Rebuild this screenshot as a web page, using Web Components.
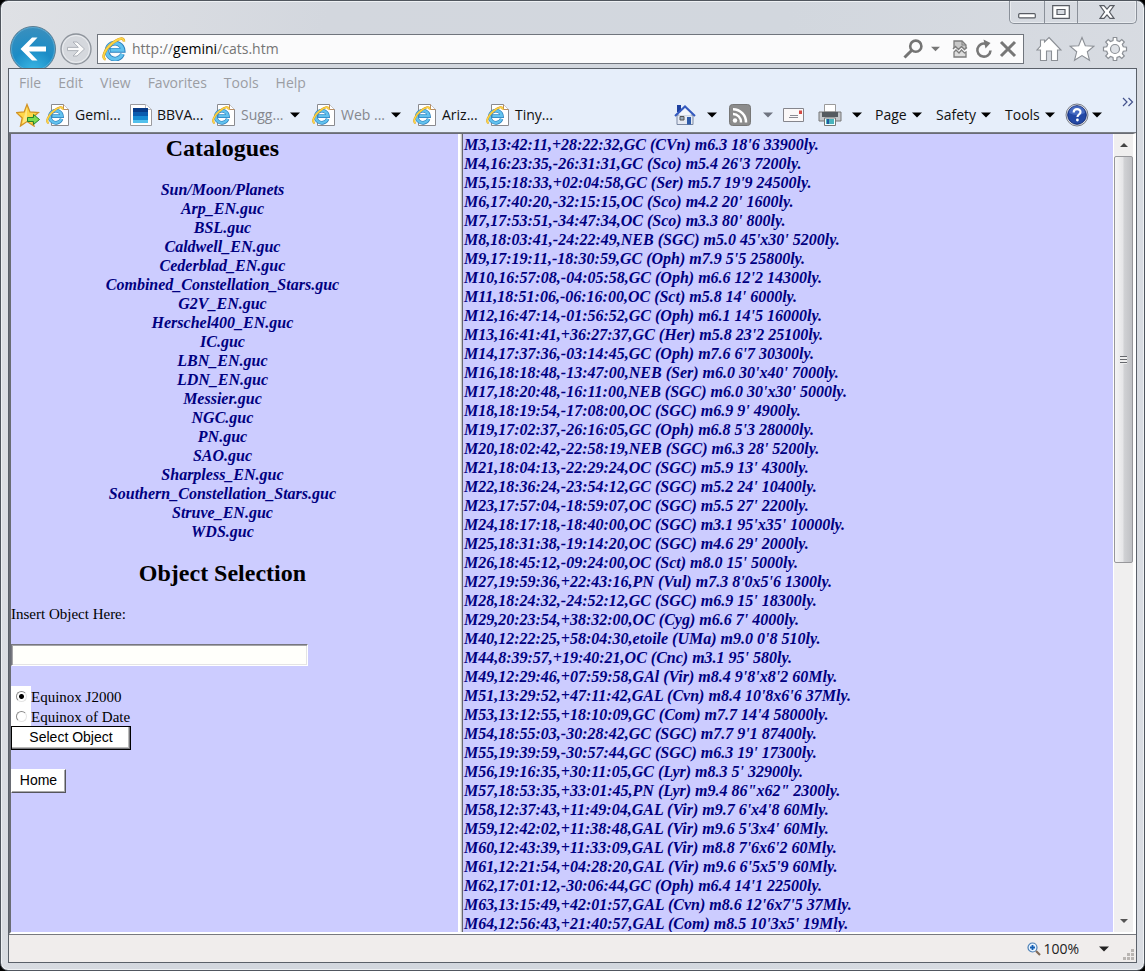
<!DOCTYPE html>
<html lang="en">
<head>
<meta charset="utf-8">
<title>Catalogues</title>
<style>
html, body { margin: 0; height: 100%; background: #000; }
body { font: 14px/20px "Open Sans", "Noto Sans", sans-serif; color: #111; overflow: hidden; }
</style>
</head>
<body>
<browser-window>
  <window-controls slot="controls"></window-controls>
  <nav-bar slot="nav"></nav-bar>
  <menu-bar slot="menus"></menu-bar>
  <favorites-bar slot="tools"></favorites-bar>
  <catalogue-frame slot="left"></catalogue-frame>
  <object-frame slot="right"></object-frame>
  <scroll-bar slot="scroll"></scroll-bar>
  <status-bar slot="status"></status-bar>
</browser-window>

<script>
const define = (name, html, setup) => customElements.define(name, class extends HTMLElement {
  constructor() {
    super();
    const t = document.createElement('template');
    t.innerHTML = html;
    this.attachShadow({ mode: 'open' }).append(t.content.cloneNode(true));
  }
  connectedCallback() { if (setup) setup(this, this.shadowRoot); }
});

const eGlyph = `<path d="M20.500 17A8 8 0 1 1 21 13.300H8" fill="none" stroke="#2b7fbd" stroke-width="4.800"/>
  <path d="M20.300 17A8 8 0 1 1 20.800 13.200H8.500" fill="none" stroke="#62c2ee" stroke-width="3.200"/>
  <path d="M3.500 22.500C-1 21 3 12 10 6.500S22 0 22 4.500" fill="none" stroke="#d99a12" stroke-width="2.600"/>
  <path d="M3.500 22.500C-1 21 3 12 10 6.500S22 0 22 4.500" fill="none" stroke="#fbd548" stroke-width="1.800"/>`;

const ICONS = {
  back: ['0 0 46 46', `<defs><radialGradient id="g" cx=".5" cy="1" r="1"><stop offset="0" stop-color="#3cb9e6"/><stop offset=".5" stop-color="#1b8cc6"/><stop offset="1" stop-color="#3b8fbd"/></radialGradient></defs>
    <circle cx="23" cy="23" r="22.500" fill="url(#g)" stroke="#5c7d92"/><circle cx="23" cy="23" r="21.500" fill="none" stroke="#6fb8da" opacity=".6"/>
    <path d="M10.500 23 22 11.500h5.500l-8.500 9H36v5H19l8.500 9H22z" fill="#fff"/>`],
  forward: ['0 0 32 32', `<circle cx="16" cy="16" r="15" fill="#d5d8dd" stroke="#8d939b" stroke-width="1.300"/><circle cx="16" cy="16" r="13.500" fill="none" stroke="#eceef1"/>
    <path d="M24.500 16 17 9h-4l5.300 5.400H7.500v3.200h10.800L13 23h4z" fill="#fafafa" stroke="#a8adb4" stroke-width=".9"/>`],
  ie: ['0 0 24 24', eGlyph],
  iepage: ['0 0 24 24', `<path d="M5.500 1.500h12l5 5v16h-17z" fill="#fff" stroke="#8a8a8e"/><path d="M17.500 1.500v5h5" fill="#fff" stroke="#b98d62"/><g transform="translate(0 3) scale(.76)">${eGlyph}</g>`],
  bbva: ['0 0 22 24', `<path d="M.5 1.500h15l6 5v16H.5z" fill="#fff" stroke="#9a9a9e"/><path d="M15.500 1.500v5h6" fill="#fff" stroke="#b7b7bb"/>
    <path d="M3 5h15v5H3z" fill="#063a87"/><path d="M3 9h15v4H3z" fill="#0a5bae"/><path d="M3 13h15v4H3z" fill="#168bd3"/><path d="M3 17h15v3H3z" fill="#52c0ec"/>`],
  addfav: ['0 0 24 24', `<path d="M11 1.500 14 9l8.500.5-6.500 5.500 2 8-7-4.500L4.500 23l1.700-8L0.500 9.700 8.200 9z" fill="#ffd748" stroke="#d29325" stroke-width="1.300"/><path d="M11 4v14l-4.500 2.500 1.300-6z" fill="#ffed9a" opacity=".7"/>
    <path d="M11.500 14.500h6V11.500l6 5-6 5v-3h-6z" fill="#7bdc50" stroke="#27832c"/>`],
  search: ['0 0 20 20', `<circle cx="12.800" cy="7.200" r="5.600" fill="none" stroke="#747474" stroke-width="2.600"/><path d="m8.800 11.200-7.300 7.300" stroke="#747474" stroke-width="3"/>`],
  compat: ['0 0 16 20', `<path d="M2 9V2h8l4 4v3" fill="#c8c8c8" stroke="#7c7c7c" stroke-width="1.300"/><path d="M10 2v4h4" fill="none" stroke="#7c7c7c"/><path d="m1 10 2.500-2.500 3 3 3-3 3 3L15 8.500" fill="none" stroke="#7c7c7c" stroke-width="1.400"/><path d="M2 18v-5l2-2 3 3 2.500-3 3 3 1.500-1v5z" fill="#ddd" stroke="#7c7c7c" stroke-width="1.300"/>`],
  refresh: ['0 0 20 20', `<path d="M16.500 11.500A6.600 6.600 0 1 1 12 4.800" fill="none" stroke="#777" stroke-width="2.600"/><path d="m9.500.5 7 3.500-5 5.500z" fill="#777"/>`],
  stop: ['0 0 20 20', `<path d="m3 3 14 14M17 3 3 17" stroke="#777" stroke-width="3"/>`],
  home: ['0 0 26 26', `<path d="M13 1.500 25 14h-3.500v10.500h-6V15h-5v9.500h-6V14H1l3.500-4V4h4v2z" fill="#fff" stroke="#8b8f95" stroke-width="1.100"/>`],
  star: ['0 0 26 26', `<path d="m13 1.500 3.300 8.200 8.700.5-6.700 5.600 2.200 8.500L13 19.600l-7.500 4.700 2.200-8.500L1 10.200l8.700-.5z" fill="#fff" stroke="#8b8f95" stroke-width="1.100"/>`],
  gear: ['0 0 26 26', `<path d="M11 4.500 11.300 1.500h3.400l.3 3 2.500 1 2.300-2 2.500 2.500-2 2.300 1 2.500 3.200.4v3.600l-3.200.4-1 2.500 2 2.300-2.500 2.500-2.300-2-2.500 1-.3 3h-3.400l-.3-3-2.500-1-2.300 2L3.700 20l2-2.300-1-2.500-3.200-.4v-3.600l3.200-.4 1-2.500-2-2.300 2.500-2.500 2.300 2z" fill="#fff" stroke="#8b8f95" stroke-width="1.200"/><circle cx="13" cy="13" r="4.500" fill="#dfe2e7" stroke="#8b8f95" stroke-width="1.200"/>`],
  chome: ['0 0 22 22', `<path d="M3 11h16v9.500H3z" fill="#e4e9f3" stroke="#7a88a3"/><path d="M3 1h4v7H3z" fill="#1c3f9f"/><path d="M11 4 5 10.500v1h12v-1z" fill="#f2f5fb"/><path d="m1 12 10-9.500L21 12" fill="none" stroke="#3459be" stroke-width="2"/><path d="M13 13h4v7.500h-4z" fill="#2d5aa9"/><path d="M6 12.500h4V16H6z" fill="#9ab" stroke="#555"/>`],
  rss: ['0 0 22 22', `<rect x=".5" y=".5" width="21" height="21" rx="3" fill="#8c8c8c" stroke="#777"/><circle cx="6" cy="16.500" r="2.200" fill="#fff"/><path d="M4 10a8 8 0 0 1 8 8.500M4 5.200a13 13 0 0 1 13 13.300" fill="none" stroke="#fff" stroke-width="2.500"/>`],
  mail: ['0 0 22 16', `<path d="M.5 1.500h20v13H.5z" fill="#fbf8f8" stroke="#85858c"/><path d="M16 3.500h3v3.500h-3z" fill="#d34a44"/><path d="M7 8.500h8M6 10.500h9" stroke="#8a8a92"/>`],
  print: ['0 0 24 24', `<path d="M6.500 1.500h11V9h-11z" fill="#fff" stroke="#9a9a9a"/><path d="M1 9h22v9H1z" fill="#c3c6ca" stroke="#777"/><path d="M4 9h16v5H4z" fill="#555b60"/><path d="M6.500 15h11v7.500h-11z" fill="#f2ffff" stroke="#777"/><path d="M8 16h8v5H8z" fill="#49b4bd"/><path d="M9 16h2v5H9z" fill="#2359a0"/>`],
  help: ['0 0 24 24', `<circle cx="12" cy="12" r="11" fill="#e5e5e8" stroke="#777c88"/><circle cx="12" cy="12" r="9.300" fill="#2449a6" stroke="#132d78"/><path d="M4 10a8 7 0 0 1 16 0q-8 4-16 0" fill="#5f82d6" opacity=".6"/><path d="M8.700 9.500c0-4.500 6.800-4.200 6.800-.5 0 2.600-3 2.400-3 5" fill="none" stroke="#fff" stroke-width="2.200"/><circle cx="12.400" cy="17" r="1.400" fill="#fff"/>`],
  caret: ['0 0 10 6', `<path d="M0 .5h10l-5 5z" fill="currentColor"/>`],
  chevrons: ['0 0 12 10', `<path d="m1 1 4 4-4 4m5.500-8 4 4-4 4" fill="none" stroke="#44528c" stroke-width="1.200"/>`],
  zoom: ['0 0 14 14', `<circle cx="5.500" cy="5.500" r="4.500" fill="#e8f4ff" stroke="#4c7fb5" stroke-width="1.200"/><path d="M5.500 3v5M3 5.500h5" stroke="#1560b5" stroke-width="1.800"/><path d="m9 9 4 4" stroke="#826a56" stroke-width="2.200"/>`],
  grip: ['0 0 12 12', `<path d="M8 0h3v3H8zM4 4h3v3H4zM8 4h3v3H8zM0 8h3v3H0zM4 8h3v3H4zM8 8h3v3H8z" fill="#b9b5b2"/>`],
  min: ['0 0 18 6', `<rect x=".7" y=".7" width="16.600" height="4.200" rx="1" fill="#fff" stroke="#585c63" stroke-width="1.200"/>`],
  max: ['0 0 18 14', `<path d="M.7.7h16.600v12.600H.7z" fill="#fff" stroke="#585c63" stroke-width="1.200"/><path d="M5 4.500h8v5H5z" fill="#d8dce2" stroke="#585c63" stroke-width="1.200"/>`],
  close: ['0 0 16 14', `<path d="M1 .7h4l3 3.500L11 .7h4L10.500 7l4.500 6.300h-4L8 9.800l-3 3.500H1L5.500 7z" fill="#fff" stroke="#585c63" stroke-width="1.200"/>`],
  up: ['0 0 10 6', `<path d="M0 5.500h10l-5-5z" fill="#444"/>`],
  down: ['0 0 10 6', `<path d="M0 .5h10l-5 5z" fill="#555"/>`]
};

define('ui-icon', `<style>:host{display:block;flex:none}svg{display:block;width:100%;height:100%}</style><svg aria-hidden="true"></svg>`, (el, root) => {
  const [box, body] = ICONS[el.getAttribute('name')];
  const svg = root.querySelector('svg');
  svg.setAttribute('viewBox', box);
  svg.innerHTML = body;
  const [, , w, h] = box.split(' ');
  el.style.width = (el.getAttribute('w') || w) + 'px';
  el.style.height = (el.getAttribute('h') || h) + 'px';
});

define('browser-window', `<style>
  :host{display:flex;flex-direction:column;height:100vh;box-sizing:border-box;border:1px solid #50565e;border-radius:8px;padding:0 7px 7px;
    background:linear-gradient(100deg,#dfe1e5,#d3d7de 25%,#d2d7de 60%,#dadde3);box-shadow:inset 0 0 0 1px #eef1f4}
  header{flex:none}
  main{flex:1;min-height:0;display:flex;flex-direction:column;border:1px solid #5a6069;background:#fff}
  .bars{flex:none;background:#e6eefa;border-bottom:1px solid #7b7f86}
  .frames{flex:1;min-height:0;display:grid;grid-template-columns:11fr 5px 16fr 20px;border:solid #696c74;border-width:1px 3px 2px 2px;border-right-color:#fff;border-bottom-color:#fff}
  .split{background:linear-gradient(90deg,#fff 2px,#eee 2px 3px,#c8c8c8 3px 4px,#66666e 4px)}
  ::slotted(*){min-height:0}
  footer{flex:none;border-top:1px solid #77797f}
</style>
<header><slot name="controls"></slot><slot name="nav"></slot></header>
<main><div class="bars"><slot name="menus"></slot><slot name="tools"></slot></div>
<div class="frames"><slot name="left"></slot><div class="split"></div><slot name="right"></slot><slot name="scroll"></slot></div>
<footer><slot name="status"></slot></footer></main>`);

define('window-controls', `<style>
  :host{display:flex;justify-content:flex-end;height:23px}
  div{display:grid;grid-template-columns:34px 33px 59px;border:1px solid #8a9099;border-top:0;border-radius:0 0 5px 5px;box-shadow:inset 0 0 0 1px #e8ebef}
  button{border:0;background:none;padding:0;display:grid;place-items:center}
  button+button{border-left:1px solid #8a9099}
  button:first-child{padding-top:8px}
</style><div><button aria-label="Minimize"><ui-icon name="min"></ui-icon></button><button aria-label="Maximize"><ui-icon name="max"></ui-icon></button><button aria-label="Close"><ui-icon name="close"></ui-icon></button></div>`);

define('nav-bar', `<style>
  :host{display:flex;align-items:center;box-sizing:border-box;height:44px;padding:6px 9px 0 2px;overflow:hidden}
  button{border:0;background:none;padding:0;flex:none}
  .back{margin:-8px 4px -8px 0}
  .forward{margin-right:5px}
  .address{flex:1;display:flex;align-items:center;height:30px;box-sizing:border-box;border:1px solid #70757d;background:#fbfbfc;padding:0 5px 0 4px;margin-right:12px}
  .url{flex:1;display:flex;margin-left:6px;color:#757575;outline:0}
  b{font-weight:400;color:#000}
  .tools,.side{display:flex;align-items:center}
  .tools button:nth-child(2){margin:0 12px 0 8px;color:#777}
  .tools button:nth-child(3){margin-right:6px}
  .tools button:nth-child(4){margin-right:4px}
  .side{gap:7px}
</style>
<button class="back" aria-label="Back"><ui-icon name="back"></ui-icon></button>
<button class="forward" aria-label="Forward"><ui-icon name="forward"></ui-icon></button>
<div class="address"><ui-icon name="ie"></ui-icon>
<div class="url" role="textbox" aria-label="Address"><span>http://<b>gemini</b>/cats.htm</span></div>
<div class="tools"><button aria-label="Search"><ui-icon name="search"></ui-icon></button><button aria-label="Search options"><ui-icon name="caret" w="9"></ui-icon></button><button aria-label="Compatibility view"><ui-icon name="compat"></ui-icon></button><button aria-label="Refresh"><ui-icon name="refresh"></ui-icon></button><button aria-label="Stop"><ui-icon name="stop"></ui-icon></button></div></div>
<div class="side"><button aria-label="Home"><ui-icon name="home"></ui-icon></button><button aria-label="Favorites"><ui-icon name="star"></ui-icon></button><button aria-label="Settings"><ui-icon name="gear"></ui-icon></button></div>`);

define('menu-bar', `<style>
  :host{display:flex;gap:17px;height:28px;padding-left:10px}
  button{border:0;background:none;padding:0;font:inherit;color:#9b9da3}
</style><button>File</button><button>Edit</button><button>View</button><button>Favorites</button><button>Tools</button><button>Help</button>`);

define('tool-item', `<style>
  :host{display:block;flex:none}
  button{display:flex;align-items:center;width:100%;height:100%;border:0;background:none;padding:0;font:inherit;color:inherit;white-space:nowrap}
  span{margin:0 5px}
  span:first-child{margin-left:0}
  .drop{color:#000}
  :host([pale]) .drop{color:#6f7480}
</style><button></button>`, (el, root) => {
  const b = root.querySelector('button');
  const icon = el.getAttribute('icon'), text = el.getAttribute('text');
  if (el.title) b.setAttribute('aria-label', el.title);
  b.innerHTML = (icon ? `<ui-icon name="${icon}"></ui-icon>` : '') + (text ? `<span>${text}</span>` : '') +
    (el.hasAttribute('drop') ? `<ui-icon class="drop" name="caret" style="margin-left:${el.getAttribute('drop') || 0}px"></ui-icon>` : '');
  el.style.width = el.getAttribute('span') + 'px';
});

define('favorites-bar', `<style>
  :host{display:flex;height:35px}
  .fav{display:flex;margin-left:7px}
  .cmd{display:flex;margin-left:auto}
  .dim{color:#85878d}
  .more{border:0;background:none;padding:0;width:14px;align-self:flex-start}
</style>
<div class="fav">
<tool-item icon="addfav" span="30" title="Add to Favorites"></tool-item>
<tool-item icon="iepage" text="Gemi..." span="84"></tool-item>
<tool-item icon="bbva" text="BBVA..." span="82"></tool-item>
<tool-item class="dim" icon="iepage" text="Sugg..." drop="1" span="100"></tool-item>
<tool-item class="dim" icon="iepage" text="Web ..." drop="1" span="101"></tool-item>
<tool-item icon="iepage" text="Ariz..." span="73"></tool-item>
<tool-item icon="iepage" text="Tiny..." span="64"></tool-item>
</div>
<div class="cmd">
<tool-item icon="chome" drop="11" span="55" title="Home"></tool-item>
<tool-item icon="rss" drop="12" pale span="54" title="Feeds"></tool-item>
<tool-item icon="mail" span="35" title="Read mail"></tool-item>
<tool-item icon="print" drop="10" span="57" title="Print"></tool-item>
<tool-item text="Page" drop span="61"></tool-item>
<tool-item text="Safety" drop span="69"></tool-item>
<tool-item text="Tools" drop span="60"></tool-item>
<tool-item icon="help" drop="3" span="57" title="Help"></tool-item>
<button class="more" aria-label="More"><ui-icon name="chevrons"></ui-icon></button>
</div>`);

const catalogues = ['Sun/Moon/Planets', 'Arp_EN.guc', 'BSL.guc', 'Caldwell_EN.guc', 'Cederblad_EN.guc', 'Combined_Constellation_Stars.guc', 'G2V_EN.guc', 'Herschel400_EN.guc', 'IC.guc', 'LBN_EN.guc', 'LDN_EN.guc', 'Messier.guc', 'NGC.guc', 'PN.guc', 'SAO.guc', 'Sharpless_EN.guc', 'Southern_Constellation_Stars.guc', 'Struve_EN.guc', 'WDS.guc'];

const linkCss = `ul{list-style:none;margin:0;padding:0}li{height:19px;white-space:nowrap}a{color:#000080;font-weight:bold;font-style:italic;text-decoration:none}`;

define('catalogue-frame', `<style>
  :host{display:block;background:#ccf;overflow:hidden;font:16px/19px "Liberation Serif",serif;color:#000}
  ${linkCss}
  .top{padding-right:24px;text-align:center}
  h2{font-size:24px;line-height:28px;margin:0 0 18px}
  ul+h2{margin-top:18px}
  form{font-size:15px}
  .text{display:block}
  #object{display:block;box-sizing:border-box;width:297px;height:22px;margin:20px 0;padding:0 3px;border:1px solid;border-color:#77777f #fff #fff #77777f;border-radius:0;background:#fffffb;box-shadow:inset 1px 1px #a5a5a8,inset -1px -1px #e4e4e4;outline:0}
  .option{display:flex;height:20px;line-height:22px}
  .box{width:20px;background:#fff;display:grid;place-items:center}
  .box input{appearance:none;width:11px;height:11px;margin:0;border:1px solid;border-color:#888 #e4e4e4 #e4e4e4 #888;border-radius:50%;background:#fff}
  .box input:checked{background:radial-gradient(circle,#000 2px,#fff 3px)}
  button{display:block;box-sizing:border-box;height:24px;padding:0 0 2px;font:14px/18px "Liberation Sans",sans-serif;color:#000;background:#fff;border:1px solid;border-color:#fff #55555c #55555c #fff;box-shadow:inset -1px -1px #aaa}
  .select{width:120px;border-color:#000;box-shadow:inset -1px -1px #77777c,inset -2px -2px #bbb}
  .home{width:55px;margin-top:19px}
</style>
<div class="top"><h2>Catalogues</h2><ul></ul><h2>Object Selection</h2></div>
<form onsubmit="return false">
<label class="text" for="object">Insert Object Here:</label><input id="object" type="text">
<div class="option"><span class="box"><input type="radio" id="j2000" name="equinox" checked></span><label for="j2000">Equinox J2000</label></div>
<div class="option"><span class="box"><input type="radio" id="date" name="equinox"></span><label for="date">Equinox of Date</label></div>
<button class="select">Select Object</button>
<button class="home" type="button">Home</button>
</form>`, (el, root) => {
  root.querySelector('ul').innerHTML = catalogues.map(c => `<li><a href="#${c}">${c}</a></li>`).join('');
});

const objects = `M3,13:42:11,+28:22:32,GC (CVn) m6.3 18'6 33900ly.
M4,16:23:35,-26:31:31,GC (Sco) m5.4 26'3 7200ly.
M5,15:18:33,+02:04:58,GC (Ser) m5.7 19'9 24500ly.
M6,17:40:20,-32:15:15,OC (Sco) m4.2 20' 1600ly.
M7,17:53:51,-34:47:34,OC (Sco) m3.3 80' 800ly.
M8,18:03:41,-24:22:49,NEB (SGC) m5.0 45'x30' 5200ly.
M9,17:19:11,-18:30:59,GC (Oph) m7.9 5'5 25800ly.
M10,16:57:08,-04:05:58,GC (Oph) m6.6 12'2 14300ly.
M11,18:51:06,-06:16:00,OC (Sct) m5.8 14' 6000ly.
M12,16:47:14,-01:56:52,GC (Oph) m6.1 14'5 16000ly.
M13,16:41:41,+36:27:37,GC (Her) m5.8 23'2 25100ly.
M14,17:37:36,-03:14:45,GC (Oph) m7.6 6'7 30300ly.
M16,18:18:48,-13:47:00,NEB (Ser) m6.0 30'x40' 7000ly.
M17,18:20:48,-16:11:00,NEB (SGC) m6.0 30'x30' 5000ly.
M18,18:19:54,-17:08:00,OC (SGC) m6.9 9' 4900ly.
M19,17:02:37,-26:16:05,GC (Oph) m6.8 5'3 28000ly.
M20,18:02:42,-22:58:19,NEB (SGC) m6.3 28' 5200ly.
M21,18:04:13,-22:29:24,OC (SGC) m5.9 13' 4300ly.
M22,18:36:24,-23:54:12,GC (SGC) m5.2 24' 10400ly.
M23,17:57:04,-18:59:07,OC (SGC) m5.5 27' 2200ly.
M24,18:17:18,-18:40:00,OC (SGC) m3.1 95'x35' 10000ly.
M25,18:31:38,-19:14:20,OC (SGC) m4.6 29' 2000ly.
M26,18:45:12,-09:24:00,OC (Sct) m8.0 15' 5000ly.
M27,19:59:36,+22:43:16,PN (Vul) m7.3 8'0x5'6 1300ly.
M28,18:24:32,-24:52:12,GC (SGC) m6.9 15' 18300ly.
M29,20:23:54,+38:32:00,OC (Cyg) m6.6 7' 4000ly.
M40,12:22:25,+58:04:30,etoile (UMa) m9.0 0'8 510ly.
M44,8:39:57,+19:40:21,OC (Cnc) m3.1 95' 580ly.
M49,12:29:46,+07:59:58,GAl (Vir) m8.4 9'8'x8'2 60Mly.
M51,13:29:52,+47:11:42,GAL (Cvn) m8.4 10'8x6'6 37Mly.
M53,13:12:55,+18:10:09,GC (Com) m7.7 14'4 58000ly.
M54,18:55:03,-30:28:42,GC (SGC) m7.7 9'1 87400ly.
M55,19:39:59,-30:57:44,GC (SGC) m6.3 19' 17300ly.
M56,19:16:35,+30:11:05,GC (Lyr) m8.3 5' 32900ly.
M57,18:53:35,+33:01:45,PN (Lyr) m9.4 86"x62" 2300ly.
M58,12:37:43,+11:49:04,GAL (Vir) m9.7 6'x4'8 60Mly.
M59,12:42:02,+11:38:48,GAL (Vir) m9.6 5'3x4' 60Mly.
M60,12:43:39,+11:33:09,GAL (Vir) m8.8 7'6x6'2 60Mly.
M61,12:21:54,+04:28:20,GAL (Vir) m9.6 6'5x5'9 60Mly.
M62,17:01:12,-30:06:44,GC (Oph) m6.4 14'1 22500ly.
M63,13:15:49,+42:01:57,GAL (Cvn) m8.6 12'6x7'5 37Mly.
M64,12:56:43,+21:40:57,GAL (Com) m8.5 10'3x5' 19Mly.`.split('\n');

define('object-frame', `<style>
  :host{display:block;background:#ccf;overflow:hidden;font:16px/19px "Liberation Serif",serif}
  ${linkCss}
  ul{padding:1px 0 0 1px}
</style><ul></ul>`, (el, root) => {
  root.querySelector('ul').innerHTML = objects.map(o => `<li><a href="#${o.split(',')[0]}">${o}</a></li>`).join('');
});

define('scroll-bar', `<style>
  :host{display:flex;flex-direction:column;background:#f0efef;border-left:1px solid #fff}
  button{border:0;background:none;padding:0;height:22px;flex:none;display:grid;place-items:center}
  .track{flex:1;min-height:0}
  .thumb{height:54%;box-sizing:border-box;border:1px solid #97979b;border-radius:2px;background:linear-gradient(90deg,#f5f5f5,#e6e6e8 45%,#d0d1d4 55%,#bfc0c4);display:grid;place-items:center}
  i{width:7px;height:8px;background:repeating-linear-gradient(#66686d 0 1px,#eee 1px 3px)}
</style><button aria-label="Scroll up"><ui-icon name="up" w="8"></ui-icon></button><div class="track"><div class="thumb"><i></i></div></div><button aria-label="Scroll down"><ui-icon name="down" w="8"></ui-icon></button>`);

define('status-bar', `<style>
  :host{display:flex;justify-content:flex-end;align-items:center;height:27px;background:#f0edec}
  button{display:flex;align-items:center;border:0;background:none;padding:0;font:inherit;color:#222}
  span{margin:0 20px 0 2px}
  .grip{margin:12px 1px 0 14px}
</style><button aria-label="Zoom level"><ui-icon name="zoom"></ui-icon><span>100%</span><ui-icon name="caret"></ui-icon></button><ui-icon class="grip" name="grip"></ui-icon>`);
</script>
</body>
</html>
